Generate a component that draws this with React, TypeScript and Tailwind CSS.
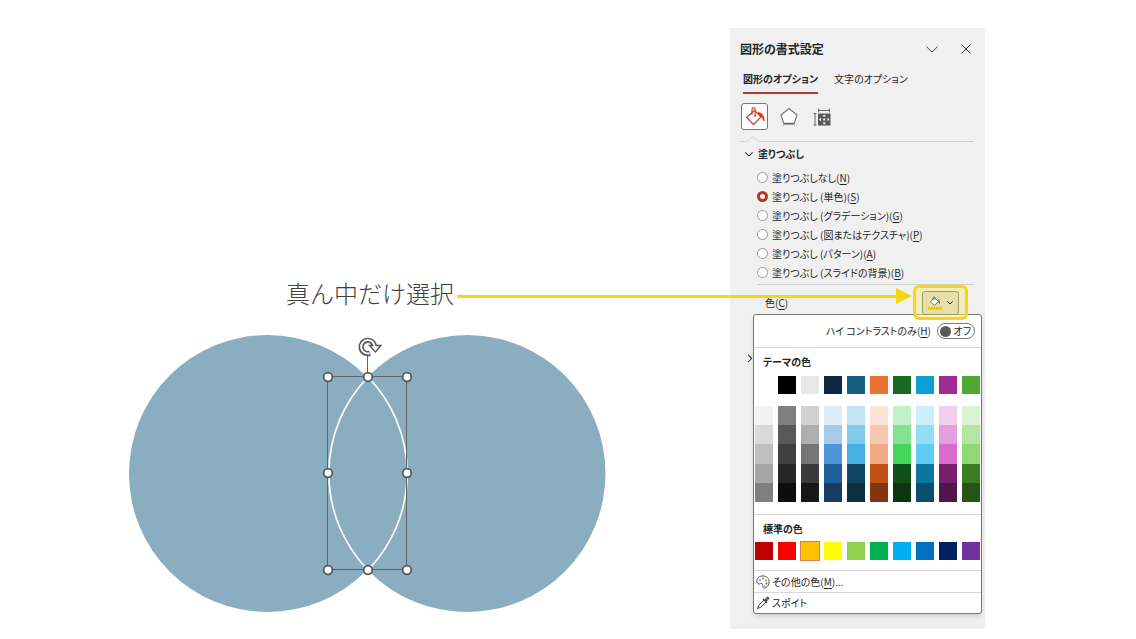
import { useState } from 'react';
import type { ReactNode } from 'react';

const fills = [
  { id: 'none', label: '塗りつぶしなし', hotkey: 'N' },
  { id: 'solid', label: '塗りつぶし (単色)', hotkey: 'S' },
  { id: 'gradient', label: '塗りつぶし (グラデーション)', hotkey: 'G' },
  { id: 'picture', label: '塗りつぶし (図またはテクスチャ)', hotkey: 'P' },
  { id: 'pattern', label: '塗りつぶし (パターン)', hotkey: 'A' },
  { id: 'background', label: '塗りつぶし (スライドの背景)', hotkey: 'B' },
];

const themeColors = [
  '#ffffff', '#000000', '#e8e8e8', '#0e2841', '#156082',
  '#e97132', '#196b24', '#0f9ed5', '#a02b93', '#4ea72e',
];

// five rows, lightest first
const themeTints = [
  '#f2f2f2', '#7f7f7f', '#d1d1d1', '#dceaf7', '#c1e4f5', '#fbe3d6', '#c2f1c8', '#caeefb', '#f2cfee', '#d9f2d0',
  '#d9d9d9', '#595959', '#aeaeae', '#a6caec', '#83cbeb', '#f6c6ad', '#84e291', '#95dcf7', '#e59edd', '#b4e5a2',
  '#bfbfbf', '#404040', '#757575', '#4e95d9', '#45b0e1', '#f1a983', '#47d45a', '#61cbf4', '#d86dcd', '#8ed973',
  '#a6a6a6', '#262626', '#3a3a3a', '#215f9a', '#104862', '#c04f15', '#12501a', '#0b769f', '#78206e', '#3b7d23',
  '#7f7f7f', '#0d0d0d', '#171717', '#163e64', '#0b3041', '#80350e', '#0c3512', '#074f6a', '#501549', '#275317',
];

const standardColors = [
  '#c00000', '#ff0000', '#ffc000', '#ffff00', '#92d050',
  '#00b050', '#00b0f0', '#0070c0', '#002060', '#7030a0',
];

function Hotkey({ children }: { children: ReactNode }) {
  return (
    <>
      (<span className="underline underline-offset-2">{children}</span>)
    </>
  );
}

function Chevron({ className }: { className: string }) {
  return (
    <svg viewBox="0 0 12 7" className={className} fill="none" stroke="currentColor" aria-hidden="true">
      <path d="M.5 .7 6 6 11.5 .7" vectorEffect="non-scaling-stroke" />
    </svg>
  );
}

function BucketIcon() {
  return (
    <svg viewBox="0 0 22 22" className="size-[22px]" fill="none" aria-hidden="true">
      <path d="M10.5 4.5 17 11l-7.5 7.5L2.500 11.500Z" fill="#fff" stroke="#c8442e" strokeWidth="1.2" strokeLinejoin="round" />
      <path d="M8 9V3.500a1.600 1.600 0 0 1 3.200 0V10" stroke="#c8442e" strokeWidth="1.2" />
      <circle cx="11.200" cy="10" r="1" fill="#c8442e" />
      <path d="M14 6c4 .3 6.500 3.500 6.500 9.500-1.200-.4-2-1.300-2.200-3.500L14 7.500Z" fill="#d03a1e" />
    </svg>
  );
}

function PentagonIcon() {
  return (
    <svg viewBox="0 0 20 20" className="size-5" fill="none" stroke="#777" aria-hidden="true">
      <path d="M10 1.500 18 8l-3 9H5L2 8Z" fill="#fff" strokeWidth="1.100" strokeLinejoin="round" />
      <path d="M5 16.500h10" stroke="#666" strokeWidth="1.500" />
      <path d="M4.500 17.500v1.500M15.500 17.500v1.500" stroke="#aaa" />
    </svg>
  );
}

function SizeIcon() {
  return (
    <svg viewBox="0 0 18 18" className="size-[18px]" fill="none" stroke="#666" aria-hidden="true">
      <path d="M5 2.500h12M5.500 .5v4M16.500 .5v4M2 5.500v12M.5 5.500h3M.5 17h3" />
      <path d="M5 5.500h12.500V17.500H5Z" fill="#5a5a5a" stroke="none" />
      <path d="M11.200 6.500 13 8.500H9.500ZM11.200 16.500l1.800-2H9.500ZM6 11.500l2-1.800v3.600ZM16.500 11.500l-2-1.800v3.600ZM10.200 10.500h2v2h-2Z" fill="#fff" stroke="none" />
    </svg>
  );
}

function FillColorIcon() {
  return (
    <svg viewBox="0 0 14 14" className="size-3.5" fill="none" aria-hidden="true">
      <path d="M6.500 1.500 10.500 5.500 6.500 9.500 2.500 6Z" fill="#fff" stroke="#666" strokeWidth=".9" />
      <path d="M5 4V1.200h2V4" stroke="#666" strokeWidth=".8" />
      <path d="M10 3c1.700.7 2.300 2.500 2 5-1-.3-1.500-1.500-1.500-3Z" fill="#2f75b5" />
      <path d="M0 11h14v2.500H0Z" fill="#ffc000" />
    </svg>
  );
}

function PaletteIcon() {
  return (
    <svg viewBox="0 0 14 14" className="size-3.5" fill="none" aria-hidden="true">
      <path
        d="M1 4.500C2 1.500 5 .6 8 1c3.500.5 5.500 3.500 5 7-.4 3-2.500 5-4.500 5-3 0-1-3.500-2.500-4.500-1-.7-1.800.8-3.200.5C1 8.600.5 6.500 1 4.500Z"
        stroke="#555"
      />
      <circle cx="4" cy="5" r="1" fill="#5b9bd5" />
      <circle cx="7" cy="3.500" r="1" fill="#4ea72e" />
      <circle cx="10" cy="5.500" r="1" fill="#e97132" />
      <circle cx="10.500" cy="8.500" r="1" fill="#d03a1e" />
      <circle cx="8.800" cy="11" r=".8" fill="#777" />
    </svg>
  );
}

function EyedropperIcon() {
  return (
    <svg viewBox="0 0 14 14" className="size-3.5" fill="none" stroke="#444" aria-hidden="true">
      <path d="m8 4-5.500 5.500-.7 2.700L.8 13.300M10 6l-5.500 5.500-2.700.7" />
      <path d="m7 3 4 4" strokeWidth="1.300" />
      <path d="M8.500 4 11 1.300c1-.8 2.500.6 1.700 1.700L10 5.500Z" fill="#777" />
    </svg>
  );
}

function Swatch({ color, className }: { color: string; className: string }) {
  return <button type="button" aria-label={color} className={className} style={{ backgroundColor: color }} />;
}

const handles = [
  [328, 377], [368, 377], [407, 377],
  [328, 473], [407, 473],
  [328, 570], [368, 570], [407, 570],
];

function OverlappingCircles() {
  return (
    <svg viewBox="128 334 480 280" className="ml-32 w-[480px] shrink-0" fill="none" role="img" aria-label="重なった2つの円">
      <circle cx="267.500" cy="473.500" r="138.500" fill="#8aaec0" />
      <circle cx="467" cy="473.500" r="138.500" fill="#8aaec0" />
      <path d="M368 377a138.500 138.500 0 0 1 0 193a138.500 138.500 0 0 1 0-193Z" fill="#8aaec0" stroke="#fff" strokeWidth="1.700" />
      <path d="M327.500 376.500h79v193h-79Z" stroke="#5f6468" />
      <path d="M367.500 356v21" stroke="#5f6468" />
      {/* rotate handle */}
      <path d="M374.500 347a6.700 6.700 0 1 0-4.500 6.300" stroke="#555" strokeWidth="5.200" />
      <path d="M369.500 345.500h11.500l-5.500 6.500Z" fill="#fff" stroke="#555" strokeWidth="1.400" />
      <path d="M374.500 347.500a6.700 6.700 0 1 0-5 5.700" stroke="#fff" strokeWidth="2" />
      {handles.map(([x, y]) => (
        <circle key={`${x}-${y}`} cx={x} cy={y} r="4.300" fill="#fff" stroke="#555" strokeWidth="1.700" />
      ))}
    </svg>
  );
}

function ColorMenu() {
  return (
    <div className="absolute top-[29px] right-[3px] z-10 w-[229px] rounded-[3px] border border-[#777] bg-white shadow-md">
      <label className="flex h-8 items-center justify-end gap-1.5 pr-1.5">
        <span>
          ハイ コントラストのみ
          <Hotkey>H</Hotkey>
        </span>
        <span className="flex h-4 w-[38px] items-center justify-between rounded-full border border-[#777] pr-[3px] pl-0.5 whitespace-nowrap">
          <input type="checkbox" role="switch" className="size-[11px] shrink-0 appearance-none rounded-full bg-[#5a5a5a]" />
          <span>オフ</span>
        </span>
      </label>

      <div className="border-t border-[#d8d8d8] px-px">
        <h3 className="flex h-7 items-center pl-2 font-bold">テーマの色</h3>
        <div className="grid grid-cols-10 gap-[5px]">
          {themeColors.map((color) => (
            <Swatch key={color} color={color} className="h-[18px]" />
          ))}
        </div>
        <div className="mt-3 mb-3 grid h-24 grid-cols-10 grid-rows-5 gap-x-[5px]">
          {themeTints.map((color, i) => (
            <Swatch key={i} color={color} className="h-full" />
          ))}
        </div>
      </div>

      <div className="border-t border-[#d8d8d8] px-px pb-2.5">
        <h3 className="flex h-[27px] items-center pl-2 font-bold">標準の色</h3>
        <div className="grid grid-cols-10 gap-[5px]">
          {standardColors.map((color) => (
            <Swatch
              key={color}
              color={color}
              className={color === '#ffc000' ? 'h-[18px] outline outline-[#d0845a]' : 'h-[18px]'}
            />
          ))}
        </div>
      </div>

      <button type="button" className="flex h-[22px] w-full items-center gap-0.5 border-t border-[#d8d8d8] pl-0.5">
        <PaletteIcon />
        <span>
          その他の色
          <Hotkey>M</Hotkey>...
        </span>
      </button>
      <button type="button" className="flex h-[21px] w-full items-center gap-0.5 border-t border-[#d8d8d8] pl-0.5">
        <EyedropperIcon />
        スポイト
      </button>
    </div>
  );
}

function FormatPane() {
  const [fill, setFill] = useState('solid');

  return (
    <aside className="mt-7 w-[255px] shrink-0 bg-[#f0f0f0] pt-2 pb-[261px] text-[10px] leading-4 text-[#262626]">
      <header className="flex h-[26px] items-center pr-3.5 pl-2.5">
        <h2 className="flex-1 text-[12px] font-bold">図形の書式設定</h2>
        <button type="button" aria-label="オプション" className="mr-[23px] text-[#444]">
          <Chevron className="w-3" />
        </button>
        <button type="button" aria-label="閉じる" className="text-[#444]">
          <svg viewBox="0 0 10 10" className="size-2.5" stroke="currentColor" aria-hidden="true">
            <path d="m.5 .5 9 9M9.500 .5l-9 9" />
          </svg>
        </button>
      </header>

      <nav className="mt-1 flex h-7 gap-4 pl-[13px]">
        <button type="button" className="border-b-2 border-[#b03a34] font-bold">
          図形のオプション
        </button>
        <button type="button" className="border-b-2 border-transparent">
          文字のオプション
        </button>
      </nav>

      <div className="mt-[9px] flex h-[27px] items-center pl-[11px]">
        <button
          type="button"
          aria-label="塗りつぶしと線"
          className="flex size-[27px] items-center justify-center rounded-[3px] border border-[#777] bg-white"
        >
          <BucketIcon />
        </button>
        <button type="button" aria-label="効果" className="ml-[11px]">
          <PentagonIcon />
        </button>
        <button type="button" aria-label="サイズとプロパティ" className="ml-3.5">
          <SizeIcon />
        </button>
      </div>

      <div className="mt-1 mr-[11px] ml-2.5 flex h-2 items-end">
        <svg viewBox="0 0 24 8" className="h-2 w-6" fill="none" stroke="#d0d0d0" aria-hidden="true">
          <path d="M0 7.500h7l6-5 6 5h5" />
        </svg>
        <div className="flex-1 border-b border-[#d0d0d0]" />
      </div>

      <section>
        <h3 className="flex h-6 items-center gap-[5px] pl-[15px] font-bold">
          <Chevron className="w-2" />
          塗りつぶし
        </h3>
        <fieldset className="mt-0.5 pl-[27px]">
          {fills.map((item) => (
            <label key={item.id} className="flex h-[19px] items-center gap-1">
              <input
                type="radio"
                name="fill"
                checked={fill === item.id}
                onChange={() => setFill(item.id)}
                className="size-[11px] appearance-none rounded-full border border-[#999] bg-white checked:border-3 checked:border-[#b7351d]"
              />
              <span>
                {item.label}
                <Hotkey>{item.hotkey}</Hotkey>
              </span>
            </label>
          ))}
        </fieldset>

        <div className="mt-0.5 mr-[11px] ml-[27px] border-t border-[#d0d0d0]" />
        <div className="relative flex h-[35px] items-center justify-between pr-[17px] pl-[35px]">
          <span id="color-label">
            色<Hotkey>C</Hotkey>
          </span>
          <div className="relative z-20 flex h-[35px] w-[55px] items-center justify-center rounded-md border-3 border-[#f5d80f] bg-[#f5e98a]/50">
            <button
              type="button"
              aria-labelledby="color-label"
              className="flex h-6 w-[37px] items-center justify-center gap-[5px] rounded-[3px] border border-[#a09a6c] bg-[#e8dfa4]"
            >
              <FillColorIcon />
              <Chevron className="w-1.5" />
            </button>
            {/* arrow running in from the caption on the slide */}
            <div className="absolute top-0 right-full mr-1 flex h-4 w-[455px] items-center">
              <div className="h-[3px] flex-1 bg-[#f5d80f]" />
              <svg viewBox="0 0 16 16" className="size-4" aria-hidden="true">
                <path d="M0 0 16 8 0 16Z" fill="#f5d80f" />
              </svg>
            </div>
          </div>
          <ColorMenu />
        </div>
      </section>

      <h3 className="mt-7 flex h-5 items-center pl-4">
        <Chevron className="w-2 -rotate-90" />
      </h3>
    </aside>
  );
}

export default function App() {
  return (
    <main
      lang="ja"
      className="flex min-h-screen items-start bg-white pr-[151px] font-['Noto_Sans_CJK_JP',sans-serif] [font-feature-settings:'palt']"
    >
      <div className="flex min-w-0 flex-1 flex-col pt-[275px]">
        <p className="mb-[23px] pl-[286px] text-[24px] leading-9 font-light whitespace-nowrap text-[#404040] [font-feature-settings:normal]">
          真ん中だけ選択
        </p>
        <OverlappingCircles />
      </div>
      <FormatPane />
    </main>
  );
}
